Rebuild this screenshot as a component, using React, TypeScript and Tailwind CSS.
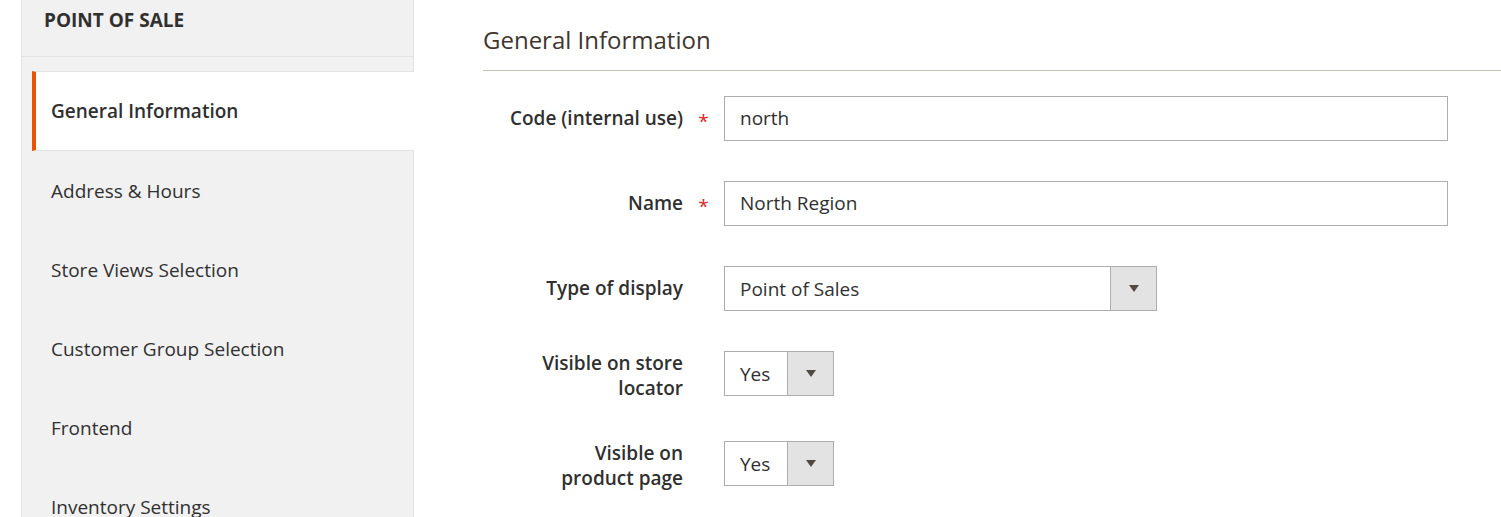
import React from "react";

const font = { fontFamily: '"Open Sans", "Noto Sans", sans-serif' };

const tabs = [
  "Address & Hours",
  "Store Views Selection",
  "Customer Group Selection",
  "Frontend",
  "Inventory Settings",
];

function Caret() {
  return (
    <svg width="10" height="7" viewBox="0 0 10 7" className="block">
      <polygon points="0,0 10,0 5,7" fill="#514943" />
    </svg>
  );
}

function Select({ value, width }: { value: string; width: string }) {
  return (
    <div className={`flex h-[45px] border border-[#adadad] bg-white ${width}`}>
      <div className="flex flex-1 items-center pl-[15px] pt-[1px] text-[19px] text-[#303030]">{value}</div>
      <div className="flex w-[46px] items-center justify-center border-l border-[#adadad] bg-[#e3e3e3]">
        <Caret />
      </div>
    </div>
  );
}

function Row({
  label,
  required,
  twoLine,
  children,
  className,
}: {
  label: React.ReactNode;
  required?: boolean;
  twoLine?: boolean;
  children: React.ReactNode;
  className?: string;
}) {
  return (
    <div className={`flex items-start ${className ?? ""}`}>
      <div
        className={`w-[200px] whitespace-nowrap text-right text-[19px] font-semibold leading-[25px] text-[#303030] ${
          twoLine ? "pt-[0px]" : "pt-[10px]"
        }`}
      >
        {label}
      </div>
      <div className="flex h-[45px] w-[41px] items-center justify-center pt-[5px] text-[19px] text-[#e22626]">
        {required ? "*" : ""}
      </div>
      {children}
    </div>
  );
}

export default function App() {
  return (
    <div className="flex h-[517px] w-[1501px] overflow-hidden bg-white" style={font}>
      <div className="ml-[21px] flex w-[393px] shrink-0 flex-col border-l border-r border-[#e3e3e3] bg-[#f1f1f1]">
        <div className="h-[57px] shrink-0 border-b border-[#e3e3e3] pl-[22px] pt-[8px] text-[19px] font-bold leading-[25px] text-[#303030]">
          POINT OF SALE
        </div>
        <div className="h-[14px] shrink-0" />
        <div className="-mr-px ml-[10px] flex h-[80px] shrink-0 items-center border-b border-l-4 border-t border-[#e3e3e3] border-l-[#eb5202] bg-white pl-[15px] text-[19px] font-semibold text-[#303030]">
          General Information
        </div>
        {tabs.map((t) => (
          <div
            key={t}
            className="flex h-[79px] shrink-0 items-center pl-[29px] pt-[1px] text-[19px] text-[#303030]"
          >
            {t}
          </div>
        ))}
      </div>

      <div className="ml-[69px] flex flex-1 flex-col">
        <div className="h-[71px] shrink-0 border-b border-[#cac3b4] pt-[25px] text-[24px] leading-[30px] text-[#41362f]">
          General Information
        </div>
        <div className="mt-[25px] flex flex-col">
          <Row label="Code (internal use)" required>
            <div className="flex h-[45px] w-[724px] items-center border border-[#adadad] bg-white pl-[15px] text-[19px] text-[#303030]">
              north
            </div>
          </Row>
          <Row label="Name" required className="mt-[40px]">
            <div className="flex h-[45px] w-[724px] items-center border border-[#adadad] bg-white pl-[15px] text-[19px] text-[#303030]">
              North Region
            </div>
          </Row>
          <Row label="Type of display" className="mt-[40px]">
            <Select value="Point of Sales" width="w-[433px]" />
          </Row>
          <Row
            label={
              <>
                Visible on store
                <br />
                locator
              </>
            }
            twoLine
            className="mt-[40px]"
          >
            <Select value="Yes" width="w-[110px]" />
          </Row>
          <Row
            label={
              <>
                Visible on
                <br />
                product page
              </>
            }
            twoLine
            className="mt-[40px]"
          >
            <Select value="Yes" width="w-[110px]" />
          </Row>
        </div>
      </div>
    </div>
  );
}
